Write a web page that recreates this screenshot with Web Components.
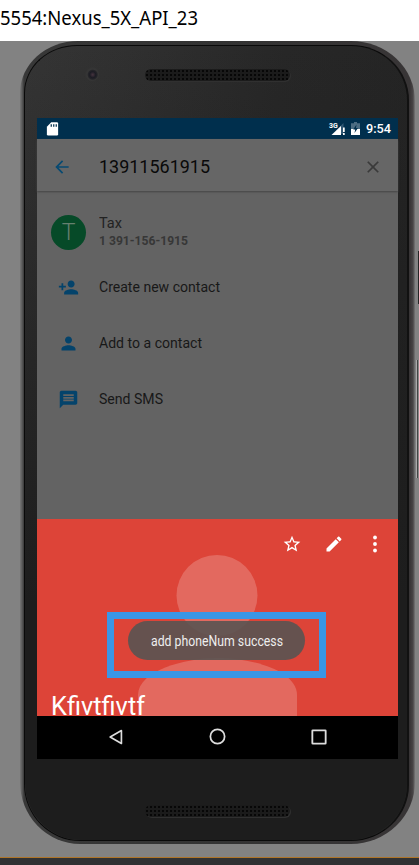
<!DOCTYPE html>
<html lang="en"><head><meta charset="utf-8"><title>5554:Nexus_5X_API_23</title>
<style>
html,body{margin:0;height:865px;overflow:hidden}
body{font-family:Roboto,"Liberation Sans",sans-serif;background:#fff}
</style></head><body>
<emulator-window></emulator-window>
<script>
const define=(name,html,setup)=>customElements.define(name,class extends HTMLElement{
  connectedCallback(){
    if(!this.shadowRoot)this.attachShadow({mode:'open'}).innerHTML=html;
    if(setup)setup(this,this.shadowRoot);
  }
});

// Text squeezed or stretched to a given pixel width
define('fit-text',`<style>:host{display:block;white-space:nowrap;width:max-content}span{display:inline-block;transform-origin:0 50%}</style><span><slot></slot></span>`,
(el,root)=>{const s=root.querySelector('span');const n=s.getBoundingClientRect().width;
  if(n)s.style.transform='scaleX('+(+el.getAttribute('w')/n)+')';el.style.width=el.getAttribute('w')+'px'});

const icons={
 back:'<path d="M20 11H7.83l5.59-5.59L12 4l-8 8 8 8 1.41-1.41L7.83 13H20z"/>',
 close:'<path d="M19 6.41 17.59 5 12 10.59 6.41 5 5 6.41 10.59 12 5 17.59 6.41 19 12 13.41 17.59 19 19 17.59 13.41 12z"/>',
 addperson:'<path d="M15 12c2.21 0 4-1.79 4-4s-1.79-4-4-4-4 1.79-4 4 1.79 4 4 4zm-9-2V7H4v3H1v2h3v3h2v-3h3v-2zm9 4c-2.67 0-8 1.34-8 4v2h16v-2c0-2.66-5.330-4-8-4z"/>',
 person:'<path d="M12 12c2.21 0 4-1.79 4-4s-1.79-4-4-4-4 1.790-4 4 1.790 4 4 4zm0 2c-2.670 0-8 1.340-8 4v2h16v-2c0-2.660-5.330-4-8-4z"/>',
 sms:'<path d="M20 2H4c-1.100 0-1.990.9-1.990 2L2 22l4-4h14c1.100 0 2-.9 2-2V4c0-1.100-.9-2-2-2zm-2 12H6v-2h12v2zm0-3H6V9h12v2zm0-3H6V6h12v2z"/>',
 star:'<path d="M22 9.240l-7.190-.620L12 2 9.190 8.630 2 9.240l5.460 4.730L5.820 21 12 17.270 18.180 21l-1.630-7.030zM12 15.400l-3.760 2.270 1-4.280-3.320-2.880 4.380-.380L12 6.100l1.710 4.040 4.380.380-3.320 2.880 1 4.280z"/>',
 edit:'<path d="M3 17.250V21h3.750L17.810 9.940l-3.750-3.750zM20.710 7.040c.390-.390.390-1.020 0-1.410l-2.340-2.340c-.390-.390-1.020-.390-1.410 0l-1.830 1.830 3.750 3.750z"/>',
 more:'<circle cx="12" cy="4.200" r="2.300"/><circle cx="12" cy="12" r="2.300"/><circle cx="12" cy="19.800" r="2.300"/>',
 navback:'<path d="M18.500 4.300v15.400L5 12z" fill="none" stroke="currentColor" stroke-width="2" stroke-linejoin="round"/>',
 navhome:'<circle cx="12" cy="12" r="9" fill="none" stroke="currentColor" stroke-width="2.200"/>',
 navrecent:'<rect x="4" y="4" width="16" height="16" rx=".6" fill="none" stroke="currentColor" stroke-width="2.200"/>',
 sdcard:'<path d="M10 2h9a2 2 0 0 1 2 2v17a2 2 0 0 1-2 2H5a2 2 0 0 1-2-2V9z"/><path d="M9 5h2v4H9zm4 0h2v4h-2zm4 0h2v4h-2z" fill="#002f4d"/>'
};
define('ui-icon',`<style>:host{display:block;flex:none}svg{display:block;width:100%;height:100%;fill:currentColor;overflow:visible}</style><svg viewBox="0 0 24 24"></svg>`,
(el,root)=>{root.querySelector('svg').innerHTML=icons[el.getAttribute('name')];el.style.width=el.style.height=el.getAttribute('size')+'px'});

define('status-bar',`<style>:host{display:flex;height:21px;background:#002f4d;color:#fff;align-items:center;padding:0 7px 0 8px;box-sizing:border-box;font-weight:500;font-size:12.500px}
 .sp{flex:1}.sig{width:16px;height:14px;margin-right:6px}.bat{width:9px;height:13px;margin-right:6px}svg{display:block;overflow:visible}text{font:700 7px Roboto}</style>
 <ui-icon name="sdcard" size="15"></ui-icon><div class="sp"></div>
 <svg class="sig" viewBox="0 0 16 14"><path d="M14.500 1v11H3.500z" fill="#315874"/><path d="M12 4v9H2.500z" fill="#fff"/><path d="M14 5.500h1.700v4.500H14zm0 5.500h1.700v2H14z" fill="#fff"/><text x="0" y="5.500" fill="#fff">3G</text></svg>
 <svg class="bat" viewBox="0 0 9 13"><path d="M3 0h3v1.300h3V13H0V1.300h3z" fill="#4c6d83"/><path d="M0 7h9v6H0z" fill="#fff"/><path d="M5.500 2.500 2.200 7.500h2L3.500 11l3.500-5H5z" fill="#002f4d"/></svg>
 <fit-text w="25">9:54</fit-text>`);

define('search-bar',`<style>:host{display:flex;height:52px;background:#666;align-items:center;padding:4px 15px 0 15px;box-sizing:border-box;box-shadow:0 1px 2px #444;position:relative}
 .b{color:#074a72}.n{font-size:18.500px;color:#090909;margin-left:27px;flex:1}.c{color:#3a3a3a}</style>
 <ui-icon class="b" name="back" size="20"></ui-icon><div class="n"><fit-text w="111">13911561915</fit-text></div><ui-icon class="c" name="close" size="20"></ui-icon>`);

define('contact-result',`<style>:host{display:flex;height:42px;align-items:center;padding:20px 14px 0;gap:13px}
 .a{width:35px;height:35px;border-radius:50%;background:#064a28;color:#66806f;display:grid;place-items:center;font-size:23px;font-weight:300}
 .n{font-size:14px;line-height:18px;color:#222}.p{font-size:12px;line-height:18px;font-weight:700;color:#373737}</style>
 <div class="a">T</div><div><div class="n"><fit-text w="23">Tax</fit-text></div><div class="p"><fit-text w="89">1 391-156-1915</fit-text></div></div>`);

define('action-row',`<style>:host{display:flex;height:56px;align-items:center;padding:0 21px;gap:20px;font-size:14px;color:#181818}ui-icon{color:#04436b}</style>
 <ui-icon size="21"></ui-icon><slot></slot>`,(el,root)=>{const i=root.querySelector('ui-icon');i.setAttribute('name',el.getAttribute('icon'));i.connectedCallback()});

define('contact-sheet',`<style>:host{display:block;height:197px;background:#dd4438;position:relative;overflow:hidden;color:#fff}
 .art{position:absolute;inset:0}.tools{display:flex;justify-content:flex-end;gap:21.500px;padding:15px 13px 0;position:relative}
 .name{position:absolute;left:14px;top:172px;font-size:26px;line-height:31px}</style>
 <svg class="art" width="361" height="197"><g fill="#fff" fill-opacity=".2"><circle cx="180" cy="76.500" r="40.500"/><path d="M101 198V176C101 152 147 139 181 139S260 152 260 176V198z"/></g></svg>
 <div class="tools"><ui-icon name="star" size="20"></ui-icon><ui-icon name="edit" size="20"></ui-icon><ui-icon name="more" size="20"></ui-icon></div>
 <div class="name"><fit-text w="94">Kfivtfivtf</fit-text></div>`);

define('nav-bar',`<style>:host{display:flex;height:43px;background:#000;color:#ddd;align-items:center;justify-content:center;gap:82px;padding-bottom:2px;box-sizing:border-box}</style>
 <ui-icon name="navback" size="20"></ui-icon><ui-icon name="navhome" size="19"></ui-icon><ui-icon name="navrecent" size="20"></ui-icon>`);

define('toast-highlight',`<style>:host{display:block;box-sizing:border-box;width:219px;height:66px;border:7px solid #3a96e6;padding:2px 14px}
 .t{box-sizing:border-box;height:39px;width:177px;border-radius:19.500px;background:rgba(88,84,82,.9);color:#eee;font-size:14px;line-height:40px;padding-left:23px}</style>
 <div class="t"><fit-text w="132">add phoneNum success</fit-text></div>`);

define('speaker-grille',`<style>:host{display:block;width:145px;height:12px;border-radius:6px;background:radial-gradient(circle,#070707 1px,transparent 1.300px) 0 0/4px 4px,#1b1b1b;box-shadow:1px 1px 0 #303030}</style>`);

define('phone-screen',`<style>:host{display:flex;flex-direction:column;width:361px;height:641px;background:#636363}.list{flex:1;display:flex;flex-direction:column}.gap{height:6px}</style>
 <status-bar></status-bar><search-bar></search-bar>
 <div class="list"><contact-result></contact-result><div class="gap"></div>
 <action-row icon="addperson"><fit-text w="121">Create new contact</fit-text></action-row>
 <action-row icon="person"><fit-text w="103">Add to a contact</fit-text></action-row>
 <action-row icon="sms"><fit-text w="64">Send SMS</fit-text></action-row></div>
 <contact-sheet></contact-sheet><nav-bar></nav-bar>`);

define('phone-body',`<style>:host{display:grid;grid-template-rows:77px 641px 1fr;justify-items:start;padding-left:17px;width:395px;height:803px;box-sizing:border-box;border-radius:58px 64px 64px 60px / 52px 60px 62px 62px;position:relative;
 background:linear-gradient(90deg,#777 0,#5c5c5c 2px,#383838 4px,#333 50%,#383536 390px,#484546 393px,#777 395px)}
 .face{position:absolute;inset:4px 6px 3px 4px;border-radius:53px 58px 58px 56px / 48px 55px 56px 57px;border:1px solid #0a0a0a;border-right:2px solid #111;background:linear-gradient(100deg,#353535 0,#303030 20%,#272727 50%,#222 100%);}
 .shade{position:absolute;inset:0;border-radius:inherit;background:linear-gradient(180deg,transparent,#1d1d1d 70%)}
 .cam{position:absolute;left:65px;top:26px;width:14px;height:14px;border-radius:50%;background:radial-gradient(circle at 55% 55%,#46343f 0,#1c1c24 3px,#252529 4.500px,#363636 5.500px,#313131 8px)}
 speaker-grille,phone-screen{position:relative}speaker-grille{margin-left:108px}.top{margin-top:28px}.bottom{margin-top:46px}</style>
 <div class="face"><div class="shade"></div></div><div class="cam"></div>
 <speaker-grille class="top"></speaker-grille><phone-screen></phone-screen><speaker-grille class="bottom"></speaker-grille>`);

define('emulator-window',`<style>:host{display:grid;grid-template-rows:41px 816px 8px;width:419px;height:865px;overflow:hidden}
 .title{font:19px/37px "Noto Sans","Open Sans",sans-serif;color:#000;background:#fff}
 .stage{background:#828282;padding-left:20px;position:relative}.foot{background:#303133;border-top:1px solid #ae7428}
 .power,.vol{position:absolute;left:416px;width:3px;background:#252525}.power{top:210px;height:53px;left:418px}.vol{top:319px;height:118px;background:linear-gradient(90deg,#aaa 1px,#444 1px 2px,#888 2px)}
 toast-highlight{position:absolute;left:107px;top:571px}</style>
 <div class="title"><fit-text w="198">5554:Nexus_5X_API_23</fit-text></div>
 <div class="stage"><div class="power"></div><div class="vol"></div><phone-body></phone-body><toast-highlight></toast-highlight></div><div class="foot"></div>`);
</script></body></html>
